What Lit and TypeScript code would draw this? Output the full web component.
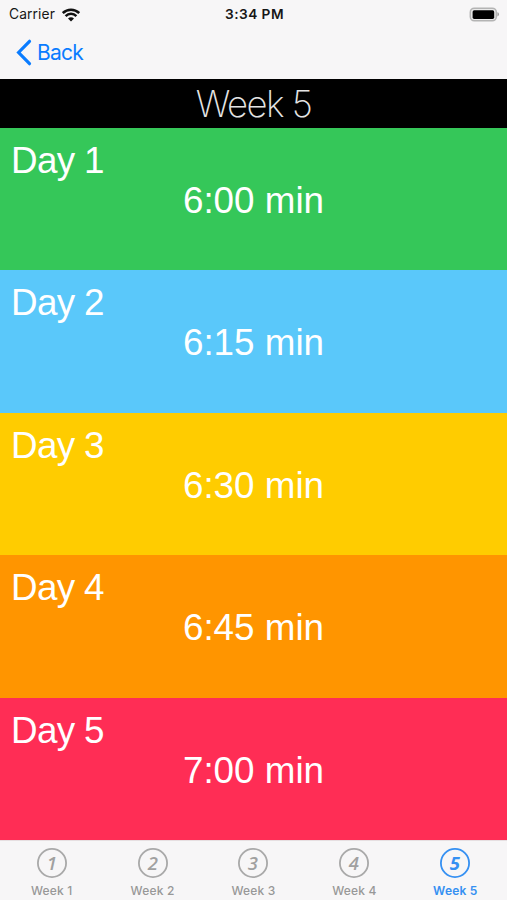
import { LitElement, html, css, svg } from "lit";
import { customElement, property, state } from "lit/decorators.js";
import { classMap } from "lit/directives/class-map.js";

const DAYS = [
  { label: "Day 1", time: "6:00 min", tone: "green" },
  { label: "Day 2", time: "6:15 min", tone: "sky" },
  { label: "Day 3", time: "6:30 min", tone: "yellow" },
  { label: "Day 4", time: "6:45 min", tone: "orange" },
  { label: "Day 5", time: "7:00 min", tone: "pink" },
];

@customElement("status-bar")
class StatusBar extends LitElement {
  static styles = css`
    :host { display: grid; grid-template-columns: 1fr auto 1fr; align-items: center; height: 27px; padding: 0 7px 0 9px; color: #161616; font: 400 13.8px/27px Inter, sans-serif; }
    .carrier { display: flex; align-items: center; gap: 7px; padding-top: 1px; height: 27px; box-sizing: border-box; letter-spacing: 0.1px; }
    .clock { font-weight: 600; font-size: 13.7px; letter-spacing: 0.45px; padding-top: 1px; }
    .battery { justify-self: end; display: block; }
    svg { display: block; }
  `;
  render() {
    return html`
      <div class="carrier">
        <span>Carrier</span>
        <svg width="18" height="14" viewBox="0 0 18 14" fill="none" stroke="#111" stroke-width="2.5">
          <path d="M.8 5C5.4 .5 12.6 .5 17.2 5" />
          <path d="M3.6 8.1C6.6 5.1 11.4 5.1 14.4 8.1" />
          <path d="M6 10.6C7.7 8.9 10.3 8.9 12 10.6L9 13.5Z" fill="#111" stroke="none" />
        </svg>
      </div>
      <span class="clock">3:34 PM</span>
      <svg class="battery" width="31" height="15" viewBox="0 0 31 15">
        <rect x="1.3" y="1.2" width="26" height="12.6" rx="4" fill="#e9e9e9" stroke="#b4b4b4" stroke-width="1.5" />
        <rect x="3.6" y="3.3" width="21.6" height="8.6" rx="1.6" fill="#000" />
        <path d="M28.4 5.2C30.6 5.8 30.6 8.8 28.4 9.4Z" fill="#a0a0a0" />
      </svg>
    `;
  }
}

@customElement("day-row")
class DayRow extends LitElement {
  @property() label = "";
  @property() time = "";
  static styles = css`
    :host { display: flex; flex-direction: column; box-sizing: border-box; padding: 13px 11px 0; color: #fff; font: 400 36.8px/40px "Liberation Sans", Arial, sans-serif; }
    .label { letter-spacing: -0.65px; }
    .time { text-align: center; }
  `;
  render() {
    return html`<div class="label">${this.label}</div><div class="time">${this.time}</div>`;
  }
}

@customElement("app-root")
class AppRoot extends LitElement {
  @state() selected = 5;

  static styles = css`
    :host { display: flex; flex-direction: column; height: 900px; background: #f7f6f7; font-family: Inter, "Liberation Sans", sans-serif; overflow: hidden; }
    .nav { height: 52px; box-sizing: border-box; padding: 0 0 2px 16px; display: flex; align-items: center; gap: 5px; color: #0a7cff; font-size: 21px; letter-spacing: -0.75px; }
    .nav svg { display: block; }
    .title { height: 49px; box-sizing: border-box; padding-top: 1px; background: #000; color: #e4e4e4; text-align: center; font: 200 36.5px/49px Inter, sans-serif; letter-spacing: -1.5px; }
    .days { height: 712px; display: grid; grid-template-rows: repeat(5, 1fr); }
    .green { background: #35c759; }
    .sky { background: #5ac8fa; }
    .yellow { background: #ffcc00; }
    .orange { background: #ff9500; }
    .pink { background: #ff2d55; }
    .tabs { flex: 1; display: grid; grid-template-columns: repeat(5, 100.9px); justify-content: center; border-top: 1px solid #e6dfe1; }
    .tab { display: flex; flex-direction: column; align-items: center; padding-top: 6px; color: #989898; font-size: 12px; font-weight: 500; line-height: 16px; letter-spacing: 0.2px; }
    .tab svg { display: block; margin-bottom: 4px; }
    .ring { fill: none; stroke: #a9a9a9; stroke-width: 1.8; }
    .digit { font: italic 600 18.5px "Open Sans", "Noto Sans", sans-serif; fill: #a0a0a0; letter-spacing: 0; }
    .active { color: #3590f2; font-weight: 600; }
    .active .ring { stroke: #3590f2; }
    .active .digit { fill: #3590f2; font-weight: 700; }
  `;

  private tab(n: number) {
    return html`
      <div class=${classMap({ tab: true, active: n === this.selected })} @click=${() => (this.selected = n)}>
        <svg width="32" height="32" viewBox="0 0 32 32">
          ${svg`<circle class="ring" cx="16" cy="16" r="14.1" />
          <text class="digit" x="15.8" y="22.7" text-anchor="middle">${n}</text>`}
        </svg>
        <span>Week ${n}</span>
      </div>
    `;
  }

  render() {
    return html`
      <status-bar></status-bar>
      <div class="nav">
        <svg width="16" height="27" viewBox="0 0 16 27" fill="none" stroke="currentColor" stroke-width="3.2" stroke-linecap="round" stroke-linejoin="miter">
          <path d="M13.5 2.3L2.6 13.5L13.5 24.7" />
        </svg>
        <span>Back</span>
      </div>
      <div class="title">Week 5</div>
      <div class="days">
        ${DAYS.map((d) => html`<day-row class=${d.tone} .label=${d.label} .time=${d.time}></day-row>`)}
      </div>
      <div class="tabs">${[1, 2, 3, 4, 5].map((n) => this.tab(n))}</div>
    `;
  }
}
